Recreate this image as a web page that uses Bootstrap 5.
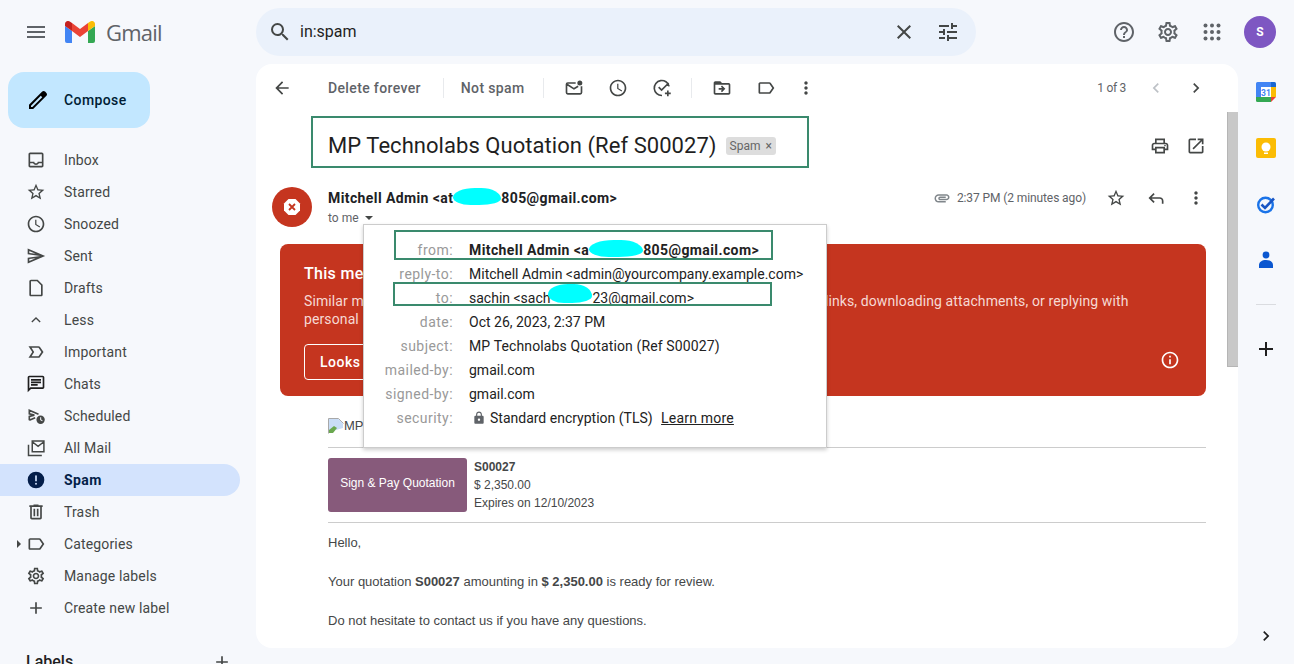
<!DOCTYPE html>
<html lang="en">
<head>
<meta charset="utf-8">
<title>Gmail</title>
<link href="https://cdn.jsdelivr.net/npm/bootstrap@5.3.0/dist/css/bootstrap.min.css" rel="stylesheet">
<style>
html,body{height:664px;overflow:hidden}
body{background:#f6f8fc;font-family:Roboto,"Liberation Sans",sans-serif;font-size:14px;color:#202124}
.ico{width:20px;height:20px;fill:currentColor;flex:none;display:block}
.ico24{width:24px;height:24px}
.strk{fill:none;stroke:currentColor;stroke-width:2}
.top-bar{height:64px;padding:0;flex-wrap:nowrap}
.brand-box{width:256px;padding-left:24px;gap:17px}
.brand-word{font-family:"Open Sans",Roboto,sans-serif;font-size:22px;color:#5f6368;letter-spacing:-.8px;margin-left:-6px}
.search-pill{width:720px;height:48px;background:#eaf1fb;border-radius:24px;padding:0 16px 0 12px;color:#444746}
.search-text{font-size:16px;margin-left:8px;color:#1f1f1f;flex:1}
.top-actions{margin-left:auto;padding-right:18px;gap:20px;color:#5f6368}
.avatar-s{width:32px;height:32px;border-radius:50%;background:#7e57c2;color:#fff;font-weight:700;font-size:12px;margin-left:0}
.page-row{height:600px}
.side-col{width:256px;flex:none;overflow:hidden}
.compose-btn{margin:8px 0 16px 8px;width:142px;height:56px;background:#c2e7ff;border-radius:16px;border:0;padding:0 0 0 18px;font-weight:500;font-size:14px;color:#001d35;gap:14px;letter-spacing:.4px}
.compose-btn:hover{background:#c2e7ff;color:#001d35}
.mail-link{height:32px;width:240px;padding:0 0 0 26px;border-radius:0 16px 16px 0;color:#444746;gap:18px;position:relative;font-size:14px;letter-spacing:.15px}
.mail-link:hover{color:#444746}
.mail-link.on{background:#d3e3fd;color:#041e49;font-weight:700;letter-spacing:.4px}
.caret-r{position:absolute;left:17px;top:12px;border-left:4px solid #444746;border-top:4px solid transparent;border-bottom:4px solid transparent}
.labels-head{padding:26px 24px 0 26px;font-size:16px;font-weight:500;color:#1f1f1f;width:256px}
.mail-card{width:982px;height:584px;background:#fff;border-radius:16px;overflow:hidden;position:relative;flex:none}
.tool-row{height:48px;padding-left:16px;color:#444746}
.tool-txt{font-weight:500;color:#5f6368;font-size:14px;letter-spacing:.36px}
.tool-sep{width:1px;height:20px;background:#e8eaed}
.tool-row .ico{color:#444746}
.pager{font-size:12px;color:#5f6368;margin-left:auto;letter-spacing:-.3px}
.scroll-thumb{position:absolute;right:0;top:48px;width:11px;height:255px;background:#c8c8c8;border-left:1px solid #b5b5b5;border-bottom:1px solid #b5b5b5}
.subj-row{padding:4px 24px 0 55px;height:56px}
.subj-box{width:498px;height:52px;border:2px solid #3a8a6d;padding:6px 0 0 15px;gap:9px}
.subj-text{font-size:22px;color:#1f1f1f;white-space:nowrap;letter-spacing:.05px}
.spam-tag{background:#ddd;color:#666;font-size:12px;font-weight:400;padding:2px 4px;border-radius:3px;gap:5px;line-height:14px;margin-top:1px}
.msg-head{padding:19px 32px 0 16px;height:76px}
.warn-av{width:40px;height:40px;border-radius:50%;background:#c5351f;margin-right:16px}
.sender{font-weight:700;font-size:14px;color:#202124;line-height:20px;margin-top:1px;white-space:nowrap;letter-spacing:.4px}
.to-me{font-size:12px;color:#5f6368;line-height:20px;gap:5px}
.blob{display:inline-block;background:#0ff;vertical-align:-2px;height:17px;border-radius:50% 45% 50% 40%/60% 70% 40% 50%}
.blob-up{vertical-align:0;height:19px;margin:-8px 0 0 -2px}
.meta-time{font-size:12px;color:#5f6368;height:24px;margin-right:12px;gap:6px;letter-spacing:-.1px}
.danger-box{margin:0 32px 0 24px;height:152px;background:#c5351f;border-radius:8px;padding:20px 24px 0;color:#fff;position:relative}
.danger-title{font-size:16px;font-weight:500;line-height:20px;letter-spacing:.3px}
.danger-text{font-size:14px;line-height:18px;margin-top:8px;color:#f6d9d4;letter-spacing:.11px;padding-right:8px}
.safe-btn{margin-top:16px;height:36px;border:1px solid #fff;border-radius:4px;color:#fff;font-weight:500;font-size:14px;padding:0 15px;line-height:34px;letter-spacing:.5px}
.safe-btn:hover{color:#fff}
.info-ico{color:#fff;margin-right:2px;margin-top:22px}
.odoo-body{margin:22px 32px 0 72px;font-family:"Liberation Sans",Arial,sans-serif;font-size:13px;color:#454748}
.logo-line{padding-bottom:13px;border-bottom:1px solid #ccc;box-sizing:content-box;height:16px;line-height:16px}
.quote-line{padding:10px 0;border-bottom:1px solid #ccc;gap:7px;height:75px}
.pay-btn{width:139px;height:54px;background:#875a7b;color:#fff;border-radius:3px;font-size:12px;border:0;padding:0 0 4px;flex:none}
.pay-btn:hover{background:#875a7b;color:#fff}
.quote-info{font-size:12px;line-height:18px}
.odoo-text{padding-top:10px;line-height:19.5px}
.odoo-text p{margin:0 0 19.5px}
.detail-pop{position:absolute;left:107px;top:160px;width:464px;height:224px;background:#fff;border:1px solid #ccc;box-shadow:0 2px 4px rgba(0,0,0,.2);padding:13px 0 0;z-index:3;font-size:14px}
.det-row{height:24px;line-height:24px;white-space:nowrap}
.det-key{width:89px;text-align:right;color:#999;margin-right:16px;flex:none;letter-spacing:.45px}
.det-val{color:#222}
.det-wide{letter-spacing:.13px}
.det-from{letter-spacing:.4px}
.det-link{color:#222;letter-spacing:.2px;margin-left:5px}
.mark-from{position:absolute;left:30px;top:5px;width:379px;height:30px;border:2px solid #3a8a6d;pointer-events:none}
.mark-to{position:absolute;left:29px;top:57px;width:379px;height:24px;border:2px solid #3a8a6d;pointer-events:none}
.rail-col{width:56px;flex:none;color:#444746;height:600px;padding-top:18px}
.rail-slot{width:20px;height:20px}
.rail-rule{width:20px;height:1px;background:#dadce0;margin:34px 0}
.rail-end{margin-top:auto;margin-bottom:18px}
</style>
</head>
<body class="overflow-hidden">
<svg class="d-none" xmlns="http://www.w3.org/2000/svg">
<symbol id="i-clock" viewBox="0 0 24 24"><path d="M11.99 2C6.47 2 2 6.48 2 12s4.47 10 9.99 10C17.52 22 22 17.52 22 12S17.52 2 11.99 2zM12 20c-4.42 0-8-3.58-8-8s3.58-8 8-8 8 3.58 8 8-3.58 8-8 8zm.5-13H11v6l5.25 3.15.75-1.23-4.5-2.67z"/></symbol>
<symbol id="i-star" viewBox="0 0 24 24"><path d="M22 9.24l-7.19-.62L12 2 9.19 8.63 2 9.24l5.46 4.73L5.82 21 12 17.27 18.18 21l-1.63-7.03L22 9.24zM12 15.4l-3.76 2.27 1-4.28-3.32-2.88 4.38-.38L12 6.1l1.71 4.04 4.38.38-3.32 2.88 1 4.28L12 15.4z"/></symbol>
<symbol id="i-label" viewBox="0 0 24 24"><path d="M17.63 5.84C17.27 5.33 16.67 5 16 5L5 5.01C3.9 5.01 3 5.9 3 7v10c0 1.1.9 1.99 2 1.99L16 19c.67 0 1.27-.33 1.63-.84L22 12l-4.37-6.16zM16 17H5V7h11l3.55 5L16 17z"/></symbol>
<symbol id="i-plus" viewBox="0 0 24 24"><path d="M19 13h-6v6h-2v-6H5v-2h6V5h2v6h6v2z"/></symbol>
<symbol id="i-more" viewBox="0 0 24 24"><path d="M12 8c1.1 0 2-.9 2-2s-.9-2-2-2-2 .9-2 2 .9 2 2 2zm0 2c-1.1 0-2 .9-2 2s.9 2 2 2 2-.9 2-2-.9-2-2-2zm0 6c-1.1 0-2 .9-2 2s.9 2 2 2 2-.9 2-2-.9-2-2-2z"/></symbol>
<symbol id="i-gear" viewBox="0 0 24 24"><path d="M19.43 12.98c.04-.32.07-.64.07-.98 0-.34-.03-.66-.07-.98l2.11-1.65c.19-.15.24-.42.12-.64l-2-3.46c-.09-.16-.26-.25-.44-.25-.06 0-.12.01-.17.03l-2.49 1c-.52-.4-1.08-.73-1.69-.98l-.38-2.65C14.46 2.18 14.25 2 14 2h-4c-.25 0-.46.18-.49.42l-.38 2.65c-.61.25-1.17.59-1.69.98l-2.49-1c-.06-.02-.12-.03-.18-.03-.17 0-.34.09-.43.25l-2 3.46c-.13.22-.07.49.12.64l2.11 1.65c-.04.32-.07.65-.07.98 0 .33.03.66.07.98l-2.11 1.65c-.19.15-.24.42-.12.64l2 3.46c.09.16.26.25.44.25.06 0 .12-.01.17-.03l2.49-1c.52.4 1.08.73 1.69.98l.38 2.65c.03.24.24.42.49.42h4c.25 0 .46-.18.49-.42l.38-2.65c.61-.25 1.17-.59 1.69-.98l2.49 1c.06.02.12.03.18.03.17 0 .34-.09.43-.25l2-3.46c.12-.22.07-.49-.12-.64l-2.11-1.65zm-1.98-1.71c.04.31.05.52.05.73 0 .21-.02.43-.05.73l-.14 1.13.89.7 1.08.84-.7 1.21-1.27-.51-1.04-.42-.9.68c-.43.32-.84.56-1.25.73l-1.06.43-.16 1.13-.2 1.35h-1.4l-.19-1.35-.16-1.13-1.06-.43c-.43-.18-.83-.41-1.23-.71l-.91-.7-1.06.43-1.27.51-.7-1.21 1.08-.84.89-.7-.14-1.13c-.03-.31-.05-.54-.05-.74s.02-.43.05-.73l.14-1.13-.89-.7-1.08-.84.7-1.21 1.27.51 1.04.42.9-.68c.43-.32.84-.56 1.25-.73l1.06-.43.16-1.13.2-1.35h1.39l.19 1.35.16 1.13 1.06.43c.43.18.83.41 1.23.71l.91.7 1.06-.43 1.27-.51.7 1.21-1.07.85-.89.7.14 1.13zM12 8c-2.21 0-4 1.79-4 4s1.79 4 4 4 4-1.79 4-4-1.79-4-4-4zm0 6c-1.1 0-2-.9-2-2s.9-2 2-2 2 .9 2 2-.9 2-2 2z"/></symbol>
</svg>

<nav class="navbar top-bar d-flex align-items-center">
  <div class="brand-box d-flex align-items-center">
    <svg class="ico ico24" style="color:#5f6368" viewBox="0 0 24 24"><path d="M3 18h18v-2H3v2zm0-5h18v-2H3v2zm0-7v2h18V6H3z"/></svg>
    <svg width="30" height="22" viewBox="0 0 30 22" class="flex-none d-block">
      <path d="M2 22h5V10L0 5v15a2 2 0 0 0 2 2z" fill="#4285f4"/>
      <path d="M23 22h5a2 2 0 0 0 2-2V5l-7 5z" fill="#34a853"/>
      <path d="M23 2v8l7-5V3c0-2.500-2.900-3.900-4.800-2.400z" fill="#fbbc04"/>
      <path d="M7 10V2l8 6 8-6v8l-8 6z" fill="#ea4335"/>
      <path d="M0 3v2l7 5V2L4.800.6C2.900-.9 0 .5 0 3z" fill="#c5221f"/>
    </svg>
    <span class="brand-word">Gmail</span>
  </div>
  <div class="search-pill d-flex align-items-center">
    <svg class="ico ico24" viewBox="0 0 24 24"><path d="M15.5 14h-.79l-.28-.27A6.471 6.471 0 0 0 16 9.500 6.500 6.500 0 1 0 9.500 16c1.610 0 3.090-.59 4.230-1.570l.27.28v.79l5 4.990L20.490 19l-4.990-5zm-6 0C7.010 14 5 11.990 5 9.500S7.010 5 9.500 5 14 7.010 14 9.500 11.990 14 9.500 14z"/></svg>
    <span class="search-text">in:spam</span>
    <svg class="ico ico24" style="margin-right:20px" viewBox="0 0 24 24"><path d="M19 6.410L17.590 5 12 10.590 6.410 5 5 6.410 10.590 12 5 17.590 6.410 19 12 13.410 17.590 19 19 17.590 13.410 12z"/></svg>
    <svg class="ico ico24" viewBox="0 0 24 24"><path d="M3 17v2h6v-2H3zM3 5v2h10V5H3zm10 16v-2h8v-2h-8v-2h-2v6h2zM7 9v2H3v2h4v2h2V9H7zm14 4v-2H11v2h10zm-6-4h2V7h4V5h-4V3h-2v6z"/></svg>
  </div>
  <div class="top-actions d-flex align-items-center">
    <svg class="ico ico24" viewBox="0 0 24 24"><path d="M11 18h2v-2h-2v2zm1-16C6.480 2 2 6.480 2 12s4.480 10 10 10 10-4.480 10-10S17.520 2 12 2zm0 18c-4.410 0-8-3.590-8-8s3.590-8 8-8 8 3.590 8 8-3.590 8-8 8zm0-14c-2.210 0-4 1.790-4 4h2c0-1.100.9-2 2-2s2 .9 2 2c0 2-3 1.750-3 5h2c0-2.250 3-2.500 3-5 0-2.210-1.790-4-4-4z"/></svg>
    <svg class="ico ico24"><use href="#i-gear"/></svg>
    <svg class="ico ico24" viewBox="0 0 24 24"><g><circle cx="5.500" cy="5.500" r="2"/><circle cx="12" cy="5.500" r="2"/><circle cx="18.500" cy="5.500" r="2"/><circle cx="5.500" cy="12" r="2"/><circle cx="12" cy="12" r="2"/><circle cx="18.500" cy="12" r="2"/><circle cx="5.500" cy="18.500" r="2"/><circle cx="12" cy="18.500" r="2"/><circle cx="18.500" cy="18.500" r="2"/></g></svg>
    <div class="avatar-s d-flex align-items-center justify-content-center">S</div>
  </div>
</nav>

<div class="page-row d-flex">
  <aside class="side-col">
    <button class="btn compose-btn d-flex align-items-center" type="button">
      <svg class="ico ico24" style="color:#000" viewBox="0 0 24 24"><path d="M20.410 4.940l-1.350-1.350c-.78-.78-2.050-.78-2.830 0L3 16.820V21h4.180L20.410 7.770c.79-.78.79-2.050 0-2.830zm-14 14.120L5 19v-1.360l9.820-9.820 1.410 1.410-9.820 9.830z"/></svg>
      <span>Compose</span>
    </button>
    <div class="nav flex-column">
      <a class="nav-link mail-link d-flex align-items-center" href="#"><svg class="ico" viewBox="0 0 24 24"><path d="M19 3H5c-1.100 0-2 .9-2 2v14c0 1.100.9 2 2 2h14c1.100 0 2-.9 2-2V5c0-1.100-.9-2-2-2zm0 16H5v-3h3.560c.69 1.190 1.970 2 3.440 2s2.750-.81 3.440-2H19v3zm0-5h-4.990c0 1.100-.9 2-2 2s-2-.9-2-2H5V5h14v9z"/></svg>Inbox</a>
      <a class="nav-link mail-link d-flex align-items-center" href="#"><svg class="ico"><use href="#i-star"/></svg>Starred</a>
      <a class="nav-link mail-link d-flex align-items-center" href="#"><svg class="ico"><use href="#i-clock"/></svg>Snoozed</a>
      <a class="nav-link mail-link d-flex align-items-center" href="#"><svg class="ico" viewBox="0 0 24 24"><path d="M4.010 6.030l7.510 3.220-7.520-1 .01-2.220m7.500 8.720L4 17.970v-2.220l7.510-1M2.010 3L2 10l15 2-15 2 .01 7L23 12 2.010 3z"/></svg>Sent</a>
      <a class="nav-link mail-link d-flex align-items-center" href="#"><svg class="ico" viewBox="0 0 24 24"><path d="M14 2H6c-1.100 0-2 .9-2 2v16c0 1.100.9 2 2 2h12c1.100 0 2-.9 2-2V8l-6-6zm4 18H6V4h7.170L18 8.830V20z"/></svg>Drafts</a>
      <a class="nav-link mail-link d-flex align-items-center" href="#"><svg class="ico" viewBox="0 0 24 24"><path d="M7 14.500l5-5 5 5" fill="none" stroke="currentColor" stroke-width="1.600"/></svg>Less</a>
      <a class="nav-link mail-link d-flex align-items-center" href="#"><svg class="ico" viewBox="0 0 24 24"><path d="M15 19H3l4.500-7L3 5h12c.65 0 1.260.31 1.630.84L21 12l-4.370 6.160c-.37.52-.98.84-1.630.84zm-8.390-2H15l3.500-5L15 7H6.610l3.200 5-3.200 5z"/></svg>Important</a>
      <a class="nav-link mail-link d-flex align-items-center" href="#"><svg class="ico" style="color:#1f1f1f" viewBox="0 0 24 24"><path d="M20 2H4c-1.100 0-2 .9-2 2v18l4-4h14c1.100 0 2-.9 2-2V4c0-1.100-.9-2-2-2zm0 14H5.170L4 17.170V4h16v12zM6 12h8v2H6zm0-3h12v2H6zm0-3h12v2H6z"/></svg>Chats</a>
      <a class="nav-link mail-link d-flex align-items-center" href="#"><svg class="ico" viewBox="0 0 24 24"><path d="M4 17V12.500l6-1.500-6-1.500V5l11 4.800M4 17l7-3" fill="none" stroke="currentColor" stroke-width="2"/><circle cx="17.500" cy="16.500" r="5"/><path d="M17 13.500h1.200v2.800l1.800 1.100-.6 1-2.400-1.500z" fill="#f6f8fc"/></svg>Scheduled</a>
      <a class="nav-link mail-link d-flex align-items-center" href="#"><svg class="ico" viewBox="0 0 24 24"><path d="M3 8v13h16M7.500 3.500h14v13h-14zM7.500 4.500l7 5.500 7-5.500" fill="none" stroke="currentColor" stroke-width="1.800"/></svg>All Mail</a>
      <a class="nav-link mail-link on d-flex align-items-center" href="#"><svg class="ico" viewBox="0 0 24 24"><circle cx="12" cy="12" r="10" fill="#041e49"/><rect x="11" y="6.500" width="2" height="7" fill="#d3e3fd"/><rect x="11" y="15.500" width="2" height="2" fill="#d3e3fd"/></svg>Spam</a>
      <a class="nav-link mail-link d-flex align-items-center" href="#"><svg class="ico" viewBox="0 0 24 24"><path d="M15 4V3H9v1H4v2h1v13c0 1.100.9 2 2 2h10c1.100 0 2-.9 2-2V6h1V4h-5zm2 15H7V6h10v13zM9 8h2v9H9zm4 0h2v9h-2z"/></svg>Trash</a>
      <a class="nav-link mail-link d-flex align-items-center" href="#"><span class="caret-r"></span><svg class="ico"><use href="#i-label"/></svg>Categories</a>
      <a class="nav-link mail-link d-flex align-items-center" href="#"><svg class="ico"><use href="#i-gear"/></svg>Manage labels</a>
      <a class="nav-link mail-link d-flex align-items-center" href="#"><svg class="ico"><use href="#i-plus"/></svg>Create new label</a>
    </div>
    <div class="labels-head d-flex justify-content-between align-items-center"><span>Labels</span><svg class="ico" style="color:#444746"><use href="#i-plus"/></svg></div>
  </aside>

  <main class="mail-card">
    <div class="tool-row d-flex align-items-center">
      <svg class="ico" viewBox="0 0 24 24" style="margin-right:36px"><path d="M20 11H7.830l5.590-5.590L12 4l-8 8 8 8 1.410-1.410L7.830 13H20v-2z"/></svg>
      <span class="tool-txt">Delete forever</span>
      <span class="tool-sep d-block" style="margin:0 17px 0 22px"></span>
      <span class="tool-txt">Not spam</span>
      <span class="tool-sep d-block" style="margin:0 20px 0 18px"></span>
      <svg class="ico" viewBox="0 0 24 24"><path class="strk" d="M14 6H4.500A1.500 1.500 0 0 0 3 7.500v10A1.500 1.500 0 0 0 4.500 19h15a1.500 1.500 0 0 0 1.500-1.500V10M3.500 7.500L12 13l5-3"/><circle cx="19" cy="6" r="3"/></svg>
      <svg class="ico" style="margin-left:24px"><use href="#i-clock"/></svg>
      <svg class="ico" viewBox="0 0 24 24" style="margin-left:24px"><path class="strk" d="M20.500 10A9 9 0 1 0 12 21M8 11l3.500 3.500L20 6M19 15v7M15.500 18.500h7"/></svg>
      <span class="tool-sep d-block" style="margin:0 20px 0 19px"></span>
      <svg class="ico" viewBox="0 0 24 24"><path d="M20 6h-8l-2-2H4c-1.100 0-1.990.9-1.990 2L2 18c0 1.100.9 2 2 2h16c1.100 0 2-.9 2-2V8c0-1.100-.9-2-2-2zm0 12H4V8h16v10zm-8.010-9l-1.410 1.410L12.160 12H8v2h4.160l-1.590 1.590L11.990 17 16 13.010 11.990 9z"/></svg>
      <svg class="ico" style="margin-left:24px"><use href="#i-label"/></svg>
      <svg class="ico" style="margin-left:20px"><use href="#i-more"/></svg>
      <span class="pager">1 of 3</span>
      <svg class="ico" style="margin-left:20px;color:#bdc1c6" viewBox="0 0 24 24"><path d="M15.410 7.410L14 6l-6 6 6 6 1.410-1.410L10.830 12z"/></svg>
      <svg class="ico" style="margin:0 32px 0 20px" viewBox="0 0 24 24"><path d="M10 6L8.590 7.410 13.170 12l-4.580 4.590L10 18l6-6z"/></svg>
    </div>

    <div class="subj-row d-flex align-items-start">
      <div class="subj-box d-flex align-items-center">
        <span class="subj-text">MP Technolabs Quotation (Ref S00027)</span>
        <span class="badge spam-tag d-inline-flex align-items-center">Spam <span>×</span></span>
      </div>
      <div class="ms-auto d-flex align-items-center" style="gap:16px;height:60px;color:#444746;margin-right:8px">
        <svg class="ico" viewBox="0 0 24 24"><path d="M19 8h-1V3H6v5H5c-1.660 0-3 1.340-3 3v6h4v4h12v-4h4v-6c0-1.660-1.340-3-3-3zM8 5h8v3H8V5zm8 12v2H8v-4h8v2zm2-2v-2H6v2H4v-4c0-.55.45-1 1-1h14c.55 0 1 .45 1 1v4h-2z"/><circle cx="18" cy="11.500" r="1"/></svg>
        <svg class="ico" viewBox="0 0 24 24"><path d="M19 19H5V5h7V3H5a2 2 0 0 0-2 2v14a2 2 0 0 0 2 2h14c1.100 0 2-.9 2-2v-7h-2v7zM14 3v2h3.590l-9.830 9.830 1.410 1.410L19 6.410V10h2V3h-7z"/></svg>
      </div>
    </div>

    <div class="msg-head d-flex align-items-start">
      <div class="warn-av d-flex align-items-center justify-content-center flex-none">
        <svg width="18" height="18" viewBox="0 0 18 18" class="d-block"><path d="M5.500 1h7L17 5.500v7L12.500 17h-7L1 12.500v-7z" fill="#fff"/><path d="M6 6l6 6M12 6l-6 6" stroke="#c5351f" stroke-width="1.800"/></svg>
      </div>
      <div>
        <div class="sender">Mitchell Admin &lt;at<span class="blob" style="width:48px"></span>805@gmail.com&gt;</div>
        <div class="to-me d-flex align-items-center">to me <svg width="10" height="6" viewBox="0 0 10 6" class="d-block"><path d="M1 1h8L5 5z" fill="#444746"/></svg></div>
      </div>
      <div class="ms-auto d-flex align-items-center" style="height:22px;color:#444746">
        <div class="meta-time d-flex align-items-center">
          <svg width="18" height="18" viewBox="0 0 24 24" fill="#80868b" class="d-block"><path d="M2 12.500C2 9.460 4.460 7 7.500 7H18c2.210 0 4 1.790 4 4s-1.790 4-4 4H9.500C8.120 15 7 13.880 7 12.500S8.120 10 9.500 10H17v2H9.410c-.55 0-.55 1 0 1H18c1.100 0 2-.9 2-2s-.9-2-2-2H7.500C5.570 9 4 10.570 4 12.500S5.570 16 7.500 16H17v2H7.500C4.460 18 2 15.540 2 12.500z"/></svg>
          <span>2:37 PM (2 minutes ago)</span>
        </div>
        <svg class="ico" style="margin-left:8px"><use href="#i-star"/></svg>
        <svg class="ico" style="margin-left:20px" viewBox="0 0 24 24"><path d="M21 19v-3.500c0-2.500-2-4.500-4.500-4.500H6.830l3.580-3.590L9 6l-6 6 6 6 1.410-1.410L6.830 13h9.670c1.400 0 2.500 1.100 2.500 2.500V19z"/></svg>
        <svg class="ico" style="margin-left:20px"><use href="#i-more"/></svg>
      </div>
    </div>

    <div class="danger-box">
      <div class="danger-title">This message seems dangerous</div>
      <div class="danger-text">Similar messages were used to steal people's personal information. Avoid clicking links, downloading attachments, or replying with personal information.</div>
      <div class="d-flex justify-content-between align-items-start">
        <a class="btn safe-btn" href="#">Looks safe</a>
        <svg class="ico info-ico" viewBox="0 0 24 24"><path d="M11 7h2v2h-2zm0 4h2v6h-2zm1-9C6.480 2 2 6.480 2 12s4.480 10 10 10 10-4.480 10-10S17.520 2 12 2zm0 18c-4.410 0-8-3.590-8-8s3.590-8 8-8 8 3.590 8 8-3.590 8-8 8z"/></svg>
      </div>
    </div>

    <div class="odoo-body">
      <div class="logo-line d-flex align-items-center">
        <svg width="16" height="16" viewBox="0 0 16 16" class="d-block flex-none"><path d="M.5 15.500V.5h10l5 5" fill="none" stroke="#a8a8a8"/><path d="M1 1h9.500L15 5.500V10L1 14z" fill="#c9ddf7"/><path d="M1 15v-3l5-4 3 2-4 5z" fill="#6aa84f"/></svg>
        <span>MP Technolabs</span>
      </div>
      <div class="quote-line d-flex">
        <button class="btn pay-btn" type="button">Sign &amp; Pay Quotation</button>
        <div class="quote-info"><strong>S00027</strong><br>$ 2,350.00<br>Expires on 12/10/2023</div>
      </div>
      <div class="odoo-text">
        <p>Hello,</p>
        <p>Your quotation <strong>S00027</strong> amounting in <strong>$ 2,350.00</strong> is ready for review.</p>
        <p>Do not hesitate to contact us if you have any questions.</p>
      </div>
    </div>

    <div class="detail-pop">
      <div class="det-row d-flex"><span class="det-key">from:</span><strong class="det-val det-from">Mitchell Admin &lt;a<span class="blob" style="width:54px"></span>805@gmail.com&gt;</strong></div>
      <div class="det-row d-flex"><span class="det-key">reply-to:</span><span class="det-val">Mitchell Admin &lt;admin@yourcompany.example.com&gt;</span></div>
      <div class="det-row d-flex"><span class="det-key">to:</span><span class="det-val">sachin &lt;sach<span class="blob blob-up" style="width:44px"></span>23@gmail.com&gt;</span></div>
      <div class="det-row d-flex"><span class="det-key">date:</span><span class="det-val">Oct 26, 2023, 2:37 PM</span></div>
      <div class="det-row d-flex"><span class="det-key">subject:</span><span class="det-val det-wide">MP Technolabs Quotation (Ref S00027)</span></div>
      <div class="det-row d-flex"><span class="det-key">mailed-by:</span><span class="det-val">gmail.com</span></div>
      <div class="det-row d-flex"><span class="det-key">signed-by:</span><span class="det-val">gmail.com</span></div>
      <div class="det-row d-flex"><span class="det-key">security:</span><span class="det-val d-flex align-items-center"><svg width="14" height="14" viewBox="0 0 24 24" fill="#5f6368" class="d-block" style="margin:0 4px 0 3px"><path d="M18 8h-1V6c0-2.760-2.240-5-5-5S7 3.240 7 6v2H6c-1.100 0-2 .9-2 2v10c0 1.100.9 2 2 2h12c1.100 0 2-.9 2-2V10c0-1.100-.9-2-2-2zm-6 9c-1.100 0-2-.9-2-2s.9-2 2-2 2 .9 2 2-.9 2-2 2zM15 8H9V6c0-1.660 1.340-3 3-3s3 1.340 3 3v2z"/></svg>Standard encryption (TLS)&nbsp;<a href="#" class="text-decoration-underline det-link">Learn more</a></span></div>
      <div class="mark-from"></div>
      <div class="mark-to"></div>
    </div>
    <div class="scroll-thumb"></div>
  </main>

  <div class="rail-col d-flex flex-column align-items-center">
    <svg class="rail-slot d-block" viewBox="0 0 20 20"><path d="M1.500 0H15v5H5v10H0V1.500A1.500 1.500 0 0 1 1.500 0z" fill="#4285f4"/><path d="M15 0h3.500A1.500 1.500 0 0 1 20 1.500V5h-5z" fill="#1967d2"/><path d="M15 5h5v10h-5z" fill="#fbbc04"/><path d="M0 15h15v5H1.500A1.500 1.500 0 0 1 0 18.500z" fill="#34a853"/><path d="M15 15h5l-5 5z" fill="#ea4335"/><rect x="5" y="5" width="10" height="10" fill="#fff"/><text x="10" y="13.500" text-anchor="middle" font-family="Roboto,sans-serif" font-weight="700" font-size="8.500" fill="#4285f4">31</text></svg>
    <svg class="rail-slot d-block" style="margin-top:36px" viewBox="0 0 20 20"><rect width="20" height="20" rx="2" fill="#fbbc04"/><circle cx="10" cy="9" r="4.500" fill="#fff"/><rect x="8" y="14.500" width="4" height="1.500" fill="#fff"/></svg>
    <svg class="rail-slot d-block" style="margin-top:36px" viewBox="0 0 20 20"><circle cx="9.500" cy="11" r="7.300" fill="none" stroke="#1a73e8" stroke-width="2.400"/><path d="M5.500 10.500l3.500 3.500L18 4.500" fill="none" stroke="#1a56c4" stroke-width="2.600"/></svg>
    <svg class="rail-slot d-block" style="margin-top:36px" viewBox="0 0 20 20"><circle cx="10" cy="5" r="3.400" fill="#0b57d0"/><path d="M3 18v-3c0-3 3-5 7-5s7 2 7 5v3z" fill="#0b57d0"/></svg>
    <div class="rail-rule"></div>
    <svg class="ico ico24" style="color:#1f1f1f;margin-top:-2px"><use href="#i-plus"/></svg>
    <svg class="ico rail-end" style="color:#1f1f1f" viewBox="0 0 24 24"><path d="M10 6L8.590 7.410 13.170 12l-4.580 4.590L10 18l6-6z"/></svg>
  </div>
</div>
</body>
</html>
